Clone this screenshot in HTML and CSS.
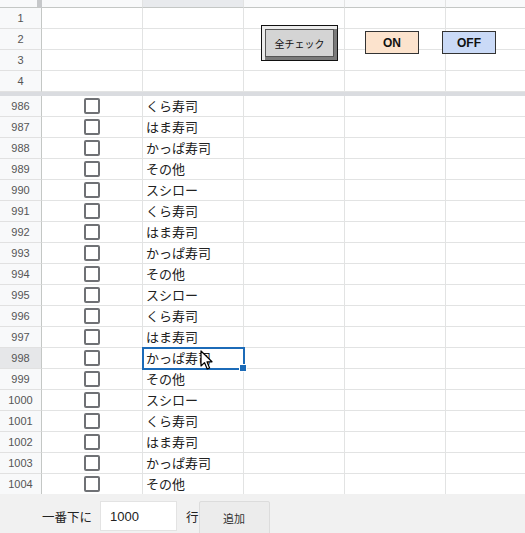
FILE: index.html
```html
<!DOCTYPE html>
<html lang="ja">
<head>
  <meta charset="UTF-8" />
  <title>チェックシート</title>
  <link rel="stylesheet" href="styles.css">
</head>
<body>
  <div class="sheet">
    <div class="grid">
      <div class="row col-head">
        <div class="rh corner"></div><div class="c"></div><div class="c picked"></div><div class="c"></div><div class="c"></div><div class="c"></div>
      </div>
      <div class="row"><div class="rh">1</div><div class="c"></div><div class="c"></div><div class="c"></div><div class="c"></div><div class="c"></div></div>
      <div class="row"><div class="rh">2</div><div class="c"></div><div class="c"></div><div class="c"></div><div class="c"></div><div class="c"></div></div>
      <div class="row"><div class="rh">3</div><div class="c"></div><div class="c"></div><div class="c"></div><div class="c"></div><div class="c"></div></div>
      <div class="row"><div class="rh">4</div><div class="c"></div><div class="c"></div><div class="c"></div><div class="c"></div><div class="c"></div></div>
      <div class="freeze"></div>
      <div id="body-rows"></div>
    </div>

    <!-- drawings floating over the sheet -->
    <button class="btn-all">全チェック</button>
    <button class="btn-flag on">ON</button>
    <button class="btn-flag off">OFF</button>

    <svg class="cursor" width="14" height="21" viewBox="0 0 14 21">
      <path d="M1 1 L1 16 L4.5 12.6 L7.2 19 L9.6 18 L7 11.8 L12 11.8 Z" fill="#fff" stroke="#000" stroke-width="1.2" stroke-linejoin="round"/>
    </svg>
  </div>

  <div class="footer">
    <span>一番下に</span>
    <input class="num" type="text" value="1000" />
    <span class="unit">行</span>
    <button class="add">追加</button>
  </div>

  <script>
    const shops = ['くら寿司', 'はま寿司', 'かっぱ寿司', 'その他', 'スシロー'];
    const wrap = document.getElementById('body-rows');
    for (let n = 986; n <= 1004; n++) {
      const row = document.createElement('div');
      row.className = 'row';
      const name = shops[(n - 986) % shops.length];
      const active = n === 998;
      row.innerHTML =
        '<div class="rh' + (active ? ' picked' : '') + '">' + n + '</div>' +
        '<div class="c center"><span class="box"></span></div>' +
        '<div class="c txt' + (active ? ' active' : '') + '">' + name + '</div>' +
        '<div class="c"></div><div class="c"></div><div class="c"></div>';
      wrap.appendChild(row);
    }
  </script>
</body>
</html>
```

FILE: styles.css
```css
* { box-sizing: border-box; }
body {
  margin: 0;
  width: 525px;
  height: 533px;
  overflow: hidden;
  background: #fff;
  font-family: "Liberation Sans", "Noto Sans CJK JP", sans-serif;
}
.sheet {
  position: relative;
  height: 494px;
  overflow: hidden;
}
.row {
  display: grid;
  grid-template-columns: 42px repeat(5, 101px);
  height: 21px;
}
.rh {
  background: #f8f9fa;
  border-right: 1px solid #c4c7c5;
  border-bottom: 1px solid #e1e1e1;
  font-size: 11px;
  color: #555;
  display: flex;
  align-items: center;
  justify-content: center;
}
.rh.picked { background: #e6e7e9; }
.c {
  border-right: 1px solid #e2e3e3;
  border-bottom: 1px solid #e2e3e3;
}
.col-head { height: 8px; }
.col-head .c,
.col-head .rh {
  background: #f8f9fa;
  border-bottom: 1px solid #c4c7c5;
}
.col-head .c.picked { background: #e8eaed; }
.col-head .corner { border-right: 5px solid #c6c8ca; }
.freeze {
  height: 4px;
  background: #dadce0;
}
.center {
  display: flex;
  align-items: center;
  justify-content: center;
}
.box {
  width: 16px;
  height: 16px;
  border: 2px solid #6f7175;
  border-radius: 2px;
}
.txt {
  font-family: "Noto Sans CJK JP", sans-serif;
  font-size: 13px;
  color: #222;
  padding-left: 3px;
  line-height: 20px;
  white-space: nowrap;
}
.txt.active {
  position: relative;
  outline: 2px solid #1c6bb8;
  outline-offset: -1px;
}
.txt.active::after {
  content: "";
  position: absolute;
  right: -4px;
  bottom: -4px;
  width: 6px;
  height: 6px;
  background: #1c6bb8;
  border: 1px solid #fff;
}

/* drawings */
.btn-all {
  position: absolute;
  left: 261px;
  top: 25px;
  width: 77px;
  height: 36px;
  padding: 0;
  font-family: "Noto Sans CJK JP", sans-serif;
  font-size: 10px;
  color: #111;
  background: #d4d4d4;
  border: 1px solid #111;
  box-shadow: inset 3px 3px 0 #ececec, inset -3px -3px 0 #7a7a7a, inset 4px 4px 0 #555, inset -4px -4px 0 #555;
}
.btn-flag {
  position: absolute;
  top: 31px;
  width: 54px;
  height: 23px;
  padding: 0;
  font-family: "Liberation Sans", sans-serif;
  font-weight: bold;
  font-size: 12px;
  color: #111;
  border: 1px solid #333;
}
.btn-flag.on { left: 365px; background: #fce3cd; }
.btn-flag.off { left: 442px; background: #cadaf7; }
.cursor {
  position: absolute;
  left: 200px;
  top: 350px;
}

.footer {
  height: 39px;
  background: #f1f1f1;
  display: flex;
  align-items: flex-start;
  padding: 7px 0 0 42px;
  font-family: "Noto Sans CJK JP", sans-serif;
  font-size: 12.5px;
  color: #222;
}
.footer span { line-height: 32px; }
.num {
  width: 77px;
  height: 30px;
  margin-left: 8px;
  border: 1px solid #e3e3e3;
  background: #fff;
  padding: 0 9px;
  font-family: "Liberation Sans", sans-serif;
  font-size: 13px;
  color: #222;
}
.unit { margin-left: 9px; }
.add {
  width: 71px;
  height: 34px;
  margin-left: 0;
  background: #ececec;
  border: 1px solid #dcdcdc;
  border-radius: 2px;
  font-family: "Noto Sans CJK JP", sans-serif;
  font-size: 11px;
  color: #333;
}
```
